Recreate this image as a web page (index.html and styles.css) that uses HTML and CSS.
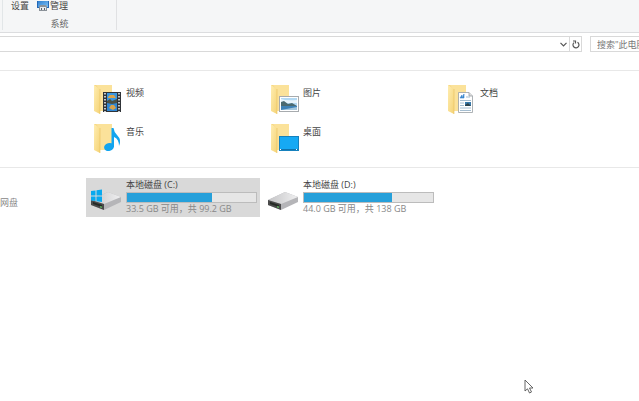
FILE: index.html
```html
<!DOCTYPE html>
<html lang="zh-CN">
<head>
  <meta charset="UTF-8">
  <title>此电脑</title>
  <meta name="viewport" content="width=device-width, initial-scale=1.0">
  <link rel="stylesheet" href="styles.css">
</head>
<body>
  <svg class="defs" aria-hidden="true">
    <defs>
      <linearGradient id="folderFront" x1="0" y1="0" x2="1" y2="1">
        <stop offset="0" stop-color="#ffedb0"/>
        <stop offset="1" stop-color="#f5d376"/>
      </linearGradient>
      <linearGradient id="driveTop" x1="0" y1="0" x2="1" y2="0">
        <stop offset="0" stop-color="#c4c4c6"/>
        <stop offset="1" stop-color="#f0f0f1"/>
      </linearGradient>
      <linearGradient id="screen" x1="0" y1="0" x2="1" y2="1">
        <stop offset="0" stop-color="#2f7fd0"/>
        <stop offset="1" stop-color="#7cc0f4"/>
      </linearGradient>
      <symbol id="folder" viewBox="0 0 32 32">
        <path d="M4 2H22V28H6Z" fill="#f5d684"/>
        <path d="M6 2H22V28H9V6Z" fill="#fbe29a"/>
        <path d="M4 2L10 6V31L4 28Z" fill="url(#folderFront)"/>
        <path d="M10 6V31" stroke="#e8c05a" stroke-width=".6"/>
      </symbol>
      <symbol id="drive" viewBox="0 0 32 20">
        <path d="M1 9L18 1L31 6V11L14 19L1 14Z" fill="#b5b5b8"/>
        <path d="M1 9L18 1L31 6L14 13Z" fill="url(#driveTop)"/>
        <path d="M1 9L14 13V19L1 14Z" fill="#4a4a4a"/>
        <path d="M3 11L12 14V16L3 13Z" fill="#252925"/>
        <path d="M10 15L12 15.600V17L10 16.400Z" fill="#5fae5f"/>
      </symbol>
    </defs>
  </svg>

  <header class="ribbon">
    <div class="group">
      <div class="commands">
        <button class="command">设置</button>
        <button class="command">
          <svg width="12" height="11" viewBox="0 0 12 11">
            <rect width="12" height="7" fill="#2468b5"/>
            <rect x="1" width="10" height="6" fill="url(#screen)"/>
            <path d="M2 7Q2 4 4 4H8Q10 4 10 7V10H2Z" fill="#8b9299"/>
            <rect x="3" y="6" width="6" height="3" fill="#e6e9ec"/>
            <path d="M4 7H5V9H4ZM7 7H8V9H7Z" fill="#59626c"/>
          </svg>
          管理
        </button>
      </div>
      <div class="group-name">系统</div>
    </div>
  </header>

  <nav class="toolbar">
    <div class="address">
      <input class="path" type="text" aria-label="地址">
      <button class="drop" aria-label="上一个位置">
        <svg width="7" height="5" viewBox="0 0 7 5"><path d="M.5 .8L3.500 3.800L6.500 .8" fill="none" stroke="#555" stroke-width="1.200"/></svg>
      </button>
      <button class="refresh" aria-label="刷新">
        <svg width="8" height="9" viewBox="0 0 8 9"><path d="M5.500 2.300A3 3 0 1 1 2 2.600M1 1H3.500V3.500" fill="none" stroke="#555" stroke-width="1.200"/></svg>
      </button>
    </div>
    <input class="search" type="text" aria-label="搜索" placeholder="搜索&quot;此电脑&quot;">
  </nav>

  <main>
    <section class="folders">
      <a class="item" href="#videos">
        <svg class="icon" viewBox="0 0 32 32">
          <use href="#folder"/>
          <rect x="13" y="9" width="18" height="20" fill="#303438"/>
          <rect x="17" y="10" width="10" height="8" fill="#3b97df"/>
          <rect x="17" y="20" width="10" height="8" fill="#3188d4"/>
          <path d="M18 14L20 12H24L26 15H18ZM19 25L21 22H24L26 25L23 27Z" fill="#d9a34c"/>
          <path d="M17 18L20 16L22 18L27 16V20L22 21L17 20Z" fill="#4b5145"/>
          <path d="M15 10V29M29 10V29" stroke="#e8edf0" stroke-width="1.600" stroke-dasharray="1.500 1.500"/>
        </svg>
        <span>视频</span>
      </a>
      <a class="item" href="#pictures">
        <svg class="icon" viewBox="0 0 32 32">
          <use href="#folder"/>
          <rect x="12.500" y="13.500" width="19" height="15" fill="#fff" stroke="#a7abae"/>
          <rect x="14" y="15" width="16" height="12" fill="#b3d9f3"/>
          <path d="M14 16Q19 18 30 17V20H14Z" fill="#e8f4fb"/>
          <path d="M14 19L17 18L21 21L25 20L30 23H14Z" fill="#4b6a70"/>
          <path d="M14 23H30V27H14Z" fill="#3f82b6"/>
          <path d="M14 27L30 24V27Z" fill="#a5c8de"/>
        </svg>
        <span>图片</span>
      </a>
      <a class="item" href="#documents">
        <svg class="icon" viewBox="0 0 32 32">
          <use href="#folder"/>
          <path d="M14.500 9.500H25L28.500 13V29.500H14.500Z" fill="#fff" stroke="#999fa3" stroke-width=".8"/>
          <path d="M25 9.500V13H28.500" fill="#ddd" stroke="#999fa3" stroke-width=".8"/>
          <path d="M16 15L18 12V15L20 11V15Z" fill="#3a86cc" stroke="#3a86cc" stroke-width=".6"/>
          <path d="M22 14H26M16 17.500H27M16 20H20M16 22.500H20M16 25H27M16 27.500H27" stroke="#a4bdd0"/>
          <rect x="21" y="19" width="6" height="4" fill="#397aab"/>
          <path d="M21 22L24 20L27 23H21Z" fill="#2b424c"/>
        </svg>
        <span>文档</span>
      </a>
      <a class="item" href="#music">
        <svg class="icon" viewBox="0 0 32 32">
          <use href="#folder"/>
          <ellipse cx="19" cy="25" rx="5" ry="4" fill="#12a5ef" transform="rotate(-15 19 25)"/>
          <path d="M21.500 6H23.500Q24 10 27 13Q32 18 29 24Q29 17 24 15V25H21.500Z" fill="#12a5ef"/>
        </svg>
        <span>音乐</span>
      </a>
      <a class="item" href="#desktop">
        <svg class="icon" viewBox="0 0 32 32">
          <use href="#folder"/>
          <rect x="12.500" y="14.500" width="19" height="14" fill="#16a9f4" stroke="#1681bd"/>
          <path d="M13 27.500H31" stroke="#1174ae"/>
          <path d="M13 27.500H14M29 27.500H30" stroke="#fff"/>
        </svg>
        <span>桌面</span>
      </a>
    </section>

    <section class="devices">
      <a class="side-link" href="#netdisk">网盘</a>
      <div class="drives">
        <a class="drive selected" href="#c">
          <svg class="drive-icon" viewBox="0 0 32 32">
            <use href="#drive" y="12" width="32" height="20"/>
            <path d="M1 12L5.500 11.500V16.500H1ZM6.500 11.300L12 10.500V16.500H6.500ZM1 17.500H5.500V22L1 21.500ZM6.500 17.500H12V23L6.500 22.200Z" fill="#08a9ef"/>
          </svg>
          <div class="info">
            <label for="c-used">本地磁盘 (C:)</label>
            <progress id="c-used" value="65.700" max="99.200"></progress>
            <span class="free">33.5 GB 可用，共 99.2 GB</span>
          </div>
        </a>
        <a class="drive" href="#d">
          <svg class="drive-icon" viewBox="0 0 32 32">
            <use href="#drive" y="12" width="32" height="20"/>
          </svg>
          <div class="info">
            <label for="d-used">本地磁盘 (D:)</label>
            <progress id="d-used" value="94" max="138"></progress>
            <span class="free">44.0 GB 可用，共 138 GB</span>
          </div>
        </a>
      </div>
    </section>
  </main>

  <svg class="cursor" width="10" height="15" viewBox="0 0 10 15">
    <path d="M1 1V12L3.500 9.800L5.500 14L7.500 13L5.500 9H9Z" fill="#fff" stroke="#555" stroke-width=".9"/>
  </svg>
</body>
</html>
```
FILE: styles.css
```css
* {
  box-sizing: border-box;
}

body {
  margin: 0;
  background: #fff;
  color: #444;
  font-family: "Open Sans", "Noto Sans CJK SC", sans-serif;
  font-size: 9px;
  line-height: 12px;
  overflow: hidden;
}

button, input {
  font: inherit;
  color: inherit;
  background: none;
  border: none;
  border-radius: 0;
  padding: 0;
  margin: 0;
  outline: none;
}

a {
  color: inherit;
  text-decoration: none;
}

.defs {
  position: absolute;
  width: 0;
  height: 0;
}

.ribbon {
  display: flex;
  background: #f5f6f7;
  border-bottom: 1px solid #dcdddf;
  padding: 0 0 2px 2px;
}

.group {
  display: flex;
  flex-direction: column;
  gap: 6px;
  width: 115px;
  border-left: 1px solid #e2e6e8;
  border-right: 1px solid #e0e1e3;
}

.commands {
  display: flex;
  gap: 8px;
  padding-left: 8px;
}

.command {
  display: flex;
  align-items: center;
  gap: 1px;
  height: 12px;
}

.group-name {
  text-align: center;
  color: #666;
}

.toolbar {
  display: flex;
  gap: 8px;
  padding: 3px 0 18px;
  border-bottom: 1px solid #e8e8e8;
}

.address {
  display: flex;
  flex: 1;
  height: 16px;
  border: 1px solid #d9d9d9;
  border-left: none;
}

.path {
  flex: 1;
  min-width: 0;
}

.drop, .refresh {
  display: flex;
  align-items: center;
  justify-content: center;
  width: 12px;
}

.refresh {
  border-left: 1px solid #d9d9d9;
}

.search {
  width: 49px;
  height: 16px;
  padding-left: 6px;
  border: 1px solid #d9d9d9;
  border-right: none;
}

.search::placeholder {
  color: #777;
}

.folders {
  display: grid;
  grid-template-columns: repeat(3, 177px);
  grid-auto-rows: 39px;
  padding: 11px 0 7px 86px;
  border-bottom: 1px solid #e8e8e8;
}

.item {
  display: flex;
  gap: 4px;
  padding: 1px 0 0 4px;
}

.item span {
  padding-top: 4px;
}

.icon, .drive-icon {
  width: 32px;
  height: 32px;
}

.devices {
  display: flex;
  padding-top: 10px;
}

.side-link {
  width: 86px;
  padding-top: 19px;
  color: #888;
}

.drives {
  display: flex;
  gap: 3px;
}

.drive {
  display: flex;
  gap: 4px;
  width: 174px;
  height: 39px;
  padding: 1px 3px 0 4px;
}

.selected {
  background: #d9d9d9;
}

.drive-icon {
  flex: none;
}

.info {
  display: flex;
  flex-direction: column;
  flex: 1;
}

label {
  padding-bottom: 1px;
}

progress {
  appearance: none;
  width: 100%;
  height: 11px;
  border: 1px solid #bcbcbc;
}

progress::-webkit-progress-bar {
  background: #e6e6e6;
}

progress::-webkit-progress-value {
  background: #26a0da;
}

.free {
  color: #888;
}

/* mouse pointer over the window */
.cursor {
  position: absolute;
  left: 524px;
  top: 379px;
}
```
